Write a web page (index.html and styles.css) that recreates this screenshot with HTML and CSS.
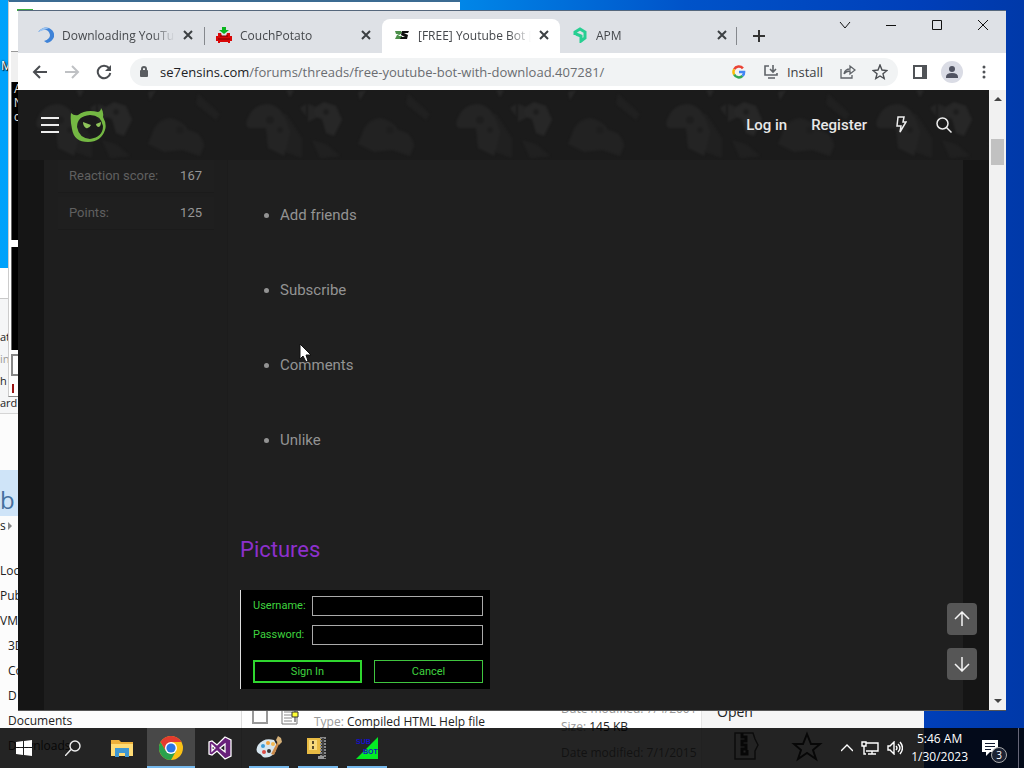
FILE: index.html
```html
<!DOCTYPE html>
<html lang="en">
<head>
<meta charset="utf-8">
<title>Desktop</title>
<link rel="stylesheet" href="styles.css">
</head>
<body>
<div class="desktop">
  <span class="desktop-label">M</span>

  <section class="explorer">
    <div class="ribbon">
      <span>at</span><span class="dim">in</span><span>h</span><span>ard</span>
    </div>
    <div class="banner">b</div>
    <div class="crumbs">s <i></i></div>
    <div class="explorer-body">
      <ul class="nav">
        <li class="root">Loc</li><li class="root">Pub</li><li class="root">VM</li>
        <li>3D</li><li>Co</li><li>D</li><li>Documents</li><li>Downloads</li>
      </ul>
      <div class="files">
        <span class="tick"></span>
        <svg class="doc" width="24" height="26" viewBox="0 0 24 26"><path d="M2 4h15v20H2z" fill="#fff" stroke="#777"/><path d="M4 9h8M4 12h8M4 15h8M4 18h8M4 21h8" stroke="#888"/><path d="M12 6l4-5 6-1-3 5-6 3z" fill="#ff3" stroke="#333"/><path d="M12 12h6v5h-6zM15 8v4M15 17v5" fill="#ff3" stroke="#333"/></svg>
        <div class="type"><span>Type:</span> Compiled HTML Help file</div>
        <div class="meta"><div><span>Date modified: 7/4/2001</span></div><div><span>Size:</span> 145 KB</div></div>
        <div class="meta-second">Date modified: 7/1/2015</div>
      </div>
      <div class="actions">
        <div class="open">Open</div>
        <svg width="100" height="34" viewBox="0 0 100 34"><path d="M4 3h18l2 6 3 6-3 6v8H4z" fill="none" stroke="#444" stroke-width="1.500"/><path d="M11 3v4h4v4h-4v4h4v4h-4v5h5v-4" fill="none" stroke="#222" stroke-width="3"/><path d="M76 4l4 10h9l-7 6 3 9-9-6-9 6 3-9-7-6h9z" fill="none" stroke="#222" stroke-width="2"/></svg>
      </div>
    </div>
  </section>

  <section class="console">
    <div class="console-title"><i></i></div>
    <div class="console-bar"></div>
    <div class="pane pane-a">A<br>N<br>c</div>
    <div class="pane pane-b"></div>
    <div class="field"></div>
    <div class="marker"><i></i></div>
  </section>

  <main class="browser">
    <header class="tabstrip">
      <div class="tabs">
        <div class="tab">
          <svg width="16" height="16" viewBox="0 0 16 16"><path d="M0 5Q5-1 11 1q6 3 5 9-2 5-7 6l-3-2q6-2 6-6-1-6-8-5z" fill="#3f83d8"/><path d="M0 5Q5-1 11 1L6 3z" fill="#9cc4f0"/></svg>
          <span class="tab-title">Downloading YouTub</span>
          <button class="close" aria-label="Close tab"><svg width="10" height="10" viewBox="0 0 10 10"><path d="M1 1l8 8M9 1L1 9"/></svg></button>
        </div>
        <div class="tab split">
          <svg width="16" height="16" viewBox="0 0 16 16"><path d="M8 7L3 3h3V0h4v3h3z" fill="#0ab51e"/><path d="M2 6h3l1 3h4l1-3h3v3h2v5h-2v2h-2v-1H4v1H2v-2H0V9h2z" fill="#d90808"/><path d="M2 12h12M4 9h8" stroke="#700"/></svg>
          <span class="tab-title">CouchPotato</span>
          <button class="close" aria-label="Close tab"><svg width="10" height="10" viewBox="0 0 10 10"><path d="M1 1l8 8M9 1L1 9"/></svg></button>
        </div>
        <div class="tab active">
          <svg width="16" height="16" viewBox="0 0 16 16"><path d="M1 4h6l1 2-4 3h4v3H1l2-4 2-1H2z" fill="#4c8f4a"/><path d="M8 4h7l-1 2h-4l4 2-1 4H6l1-2h4L7 8z" fill="#111"/></svg>
          <span class="tab-title">[FREE] Youtube Bot [</span>
          <button class="close" aria-label="Close tab"><svg width="10" height="10" viewBox="0 0 10 10"><path d="M1 1l8 8M9 1L1 9"/></svg></button>
        </div>
        <div class="tab last">
          <svg width="16" height="16" viewBox="0 0 16 16"><path d="M3 8V5l5-3 5 3v6l-4 3V9L4 7" fill="none" stroke="#27cf92" stroke-width="3"/></svg>
          <span class="tab-title">APM</span>
          <button class="close" aria-label="Close tab"><svg width="10" height="10" viewBox="0 0 10 10"><path d="M1 1l8 8M9 1L1 9"/></svg></button>
        </div>
        <button class="new-tab" aria-label="New tab"><svg width="12" height="12" viewBox="0 0 12 12"><path d="M6 0v12M0 6h12" stroke="#333" stroke-width="2"/></svg></button>
      </div>
      <div class="caption">
        <button aria-label="Search tabs"><svg width="12" height="12" viewBox="0 0 12 12"><path d="M1 3l5 6 5-6"/></svg></button>
        <button aria-label="Minimize"><svg width="12" height="12" viewBox="0 0 12 12"><path d="M1 6.500h10"/></svg></button>
        <button aria-label="Maximize"><svg width="12" height="12" viewBox="0 0 12 12"><path d="M1.500 1.500h9v9h-9z"/></svg></button>
        <button aria-label="Close"><svg width="12" height="12" viewBox="0 0 12 12"><path d="M1 1l10 10M11 1L1 11"/></svg></button>
      </div>
    </header>
    <div class="toolbar">
      <button aria-label="Back"><svg width="16" height="16" viewBox="0 0 16 16"><path d="M15 8H2M8 2L2 8l6 6" stroke="#4a4d51" stroke-width="2" fill="none"/></svg></button>
      <button aria-label="Forward"><svg width="16" height="16" viewBox="0 0 16 16"><path d="M1 8h13M8 2l6 6-6 6" stroke="#bfc1c4" stroke-width="2" fill="none"/></svg></button>
      <button aria-label="Reload"><svg width="16" height="16" viewBox="0 0 16 16"><path d="M13 4a6.300 6.300 0 1 0 1.300 5" stroke="#4a4d51" stroke-width="2" fill="none"/><path d="M15 1v6H9z" fill="#4a4d51"/></svg></button>
      <div class="omnibox">
        <svg width="12" height="14" viewBox="0 0 12 14"><rect x="2" y="5" width="8" height="7" rx="1" fill="#5a5d61"/><path d="M4 6V4a2 2 0 0 1 4 0v2" fill="none" stroke="#5a5d61" stroke-width="2"/></svg>
        <a class="url" href="#"><b>se7ensins.com</b>/forums/threads/free-youtube-bot-with-download.407281/</a>
        <svg class="google" width="14" height="14" viewBox="0 0 14 14" fill="none" stroke-width="2.500"><path d="M2.200 4.300A5.200 5.200 0 0 1 10.900 3.400" stroke="#ea4335"/><path d="M2.200 4.300a5.200 5.200 0 0 0 0 5.200" stroke="#fbbc05"/><path d="M2.200 9.500a5.200 5.200 0 0 0 8.300 1.400" stroke="#34a853"/><path d="M10.500 10.900A5 5 0 0 0 12.100 7H7" stroke="#4285f4"/></svg>
        <button class="install"><svg width="16" height="16" viewBox="0 0 16 16" fill="none" stroke="#5f6368" stroke-width="1.600"><path d="M6 2H2v9h12V9M10 1v7M7 5l3 3 3-3M5 14h7"/></svg>Install</button>
        <button aria-label="Share"><svg width="16" height="16" viewBox="0 0 16 16" fill="none" stroke="#5f6368" stroke-width="1.300"><path d="M1 5v9h11v-3M4 10q1-5 6-5V2l5 4-5 4V7Q6 7 4 10z"/></svg></button>
        <button aria-label="Bookmark"><svg width="16" height="16" viewBox="0 0 16 16" fill="none" stroke="#4a4d51" stroke-width="1.400"><path d="M8 1l2 5 5 .5-4 3.300 1.200 4.700L8 12l-4.200 2.500L5 9.800 1 6.500 6 6z"/></svg></button>
      </div>
      <button aria-label="Side panel"><svg width="14" height="14" viewBox="0 0 14 14"><path d="M1 1h12v12H1z" fill="none" stroke="#505357" stroke-width="2"/><path d="M9 1h4v12H9z" fill="#505357"/></svg></button>
      <button aria-label="Profile"><svg width="22" height="22" viewBox="0 0 22 22"><circle cx="11" cy="11" r="11" fill="#dadce5"/><circle cx="11" cy="8" r="3" fill="#505361"/><path d="M5 16q0-4 6-4t6 4v1H5z" fill="#505361"/></svg></button>
      <button aria-label="Menu"><svg width="4" height="14" viewBox="0 0 4 14" fill="#505357"><circle cx="2" cy="2" r="1.500"/><circle cx="2" cy="7" r="1.500"/><circle cx="2" cy="12" r="1.500"/></svg></button>
    </div>

    <div class="viewport">
      <div class="page">
        <header class="site-header">
          <svg class="pattern" width="100%" height="100%" aria-hidden="true">
            <defs>
              <pattern id="pads" x="80" y="0" width="210" height="70" patternUnits="userSpaceOnUse">
                <path d="M6 18l10-6 12 4 6 14-8 16-8-3-4-14-12-4z" fill="#272727"/>
                <path d="M188 24q-16 0-20 16l20 22 16 6 0-20z" fill="#202020"/>
                <path d="M54 44q4-14 18-16 12 2 18 12 14 2 16 16l-4 10-18-6-18 2-16-8z" fill="#222"/>
                <path d="M100 4l22 20-4 6-20-16z" fill="#202020"/>
                <path d="M148 34q4-18 20-20 12 0 18 12l6 16-6 24-16-8-2-20-18 0z" fill="#242424"/>
                <path d="M4 50l14 4 14 12-20 2z" fill="#202020"/>
                <path d="M50 2l8-2-6 10zM188 0h8l-4 7z" fill="#272727"/>
                <path d="M202 18l6-4v12zM0 14l6 2 2 12-8 4z" fill="#252525"/>
                <g fill="#1e1e1e"><circle cx="18" cy="22" r="3"/><circle cx="82" cy="40" r="4"/><circle cx="172" cy="30" r="4"/><circle cx="182" cy="40" r="3"/></g>
              </pattern>
            </defs>
            <rect width="100%" height="100%" fill="url(#pads)"/>
          </svg>
          <div class="header-row">
            <button aria-label="Menu"><svg width="20" height="16" viewBox="0 0 20 16"><path d="M1 1h18M1 8h18M1 15h18" stroke="#eee" stroke-width="2"/></svg></button>
            <a class="logo" href="#" aria-label="Home"><svg width="36" height="36" viewBox="0 0 36 36"><path d="M1 6q3 3 7 2 8-6 20-3 3-1 3-4 3 4 2 9 4 7 2 13-4 12-17 12Q4 35 2 22 0 13 1 6zM20 8Q7 9 7 20q2 11 13 12 13-2 13-13Q31 8 20 8z" fill="#74b843" fill-rule="evenodd"/><path d="M13 15l8 3q-2 4-5 3-3-2-3-6zM26 17l5-2q0 5-3 5-2-1-2-3z" fill="#8fc45a"/></svg></a>
            <nav>
              <a href="#">Log in</a>
              <a href="#">Register</a>
              <button aria-label="What's new"><svg width="12" height="18" viewBox="0 0 12 18" fill="none" stroke="#eee" stroke-width="1.500"><path d="M3 1h6L8 6h3L5 16l1-6H2z"/></svg></button>
              <button aria-label="Search"><svg width="16" height="16" viewBox="0 0 16 16" fill="none" stroke="#eee" stroke-width="1.500"><circle cx="6.500" cy="6.500" r="5.500"/><path d="M10.500 10.500L15.500 15.500"/></svg></button>
            </nav>
          </div>
        </header>
        <article class="post">
          <aside>
            <dl>
              <div><dt>Reaction score:</dt><dd>167</dd></div>
              <div><dt>Points:</dt><dd>125</dd></div>
            </dl>
          </aside>
          <div class="message">
            <ul><li>Add friends</li><li>Subscribe</li><li>Comments</li><li>Unlike</li></ul>
            <h2>Pictures</h2>
            <form class="login">
              <label for="u">Username:</label><input id="u" type="text">
              <label for="p">Password:</label><input id="p" type="password">
              <div class="login-buttons"><button type="button" class="primary">Sign In</button><button type="button">Cancel</button></div>
            </form>
          </div>
        </article>
        <div class="jump">
          <button aria-label="Top"><svg width="16" height="16" viewBox="0 0 16 16"><path d="M8 15V2M1 8l7-7 7 7"/></svg></button>
          <button aria-label="Bottom"><svg width="16" height="16" viewBox="0 0 16 16"><path d="M8 1v13M1 8l7 7 7-7"/></svg></button>
        </div>
      </div>
      <div class="scrollbar"><i class="up"></i><span class="thumb"></span><i class="down"></i></div>
    </div>
  </main>

  <footer class="taskbar">
    <div class="apps">
      <button aria-label="Start"><svg width="16" height="16" viewBox="0 0 16 16" fill="#fff"><path d="M0 2l7-1v6H0zM8 1l8-1v7H8zM0 8h7v7l-7-1zM8 8h8v8l-8-1z"/></svg></button>
      <button aria-label="Search"><svg width="16" height="16" viewBox="0 0 16 16" fill="none" stroke="#eee" stroke-width="1.400"><circle cx="10" cy="6" r="5"/><path d="M6 9.500L0 16"/></svg></button>
      <button aria-label="File Explorer"><svg width="22" height="18" viewBox="0 0 22 18"><path d="M0 1h8l2 2h12v14H0z" fill="#eeb13b"/><path d="M0 5h22v12H0z" fill="#ffdc75"/><path d="M4 9h14v9h-4v-4H8v4H4z" fill="#3e97d3"/></svg></button>
      <button class="on current" aria-label="Chrome"><svg width="24" height="24" viewBox="0 0 24 24"><circle cx="12" cy="12" r="12" fill="#fbc116"/><path d="M1.600 6a12 12 0 0 0 10.400 18l5-9-10 0z" fill="#2aa24c"/><path d="M1.600 6A12 12 0 0 1 22.400 6H12L7 15z" fill="#e33b2e"/><circle cx="12" cy="12" r="6" fill="#fff"/><circle cx="12" cy="12" r="4.600" fill="#2a76e4"/></svg></button>
      <button aria-label="Visual Studio"><svg width="24" height="24" viewBox="0 0 24 24"><path d="M17 1l6 3v16l-6 3-8-8-5 4-3-1V6l3-1 5 4zM17 8l-5 4 5 4zM4 9v6l3-3z" fill="#68217a" fill-rule="evenodd" stroke="#fff" stroke-width="1.300"/></svg></button>
      <button class="on" aria-label="Paint"><svg width="26" height="24" viewBox="0 0 26 24"><path d="M2 9Q8 1 18 4q5 7 0 14-6 5-11 3-2-3-5-4-3-3 0-8z" fill="#d6e5ef"/><circle cx="7" cy="10" r="2" fill="#3b9bd8"/><circle cx="12" cy="7" r="2" fill="#f1a33e"/><circle cx="17" cy="8" r="2" fill="#f0b752"/><circle cx="8" cy="16" r="2" fill="#da4d47"/><circle cx="13" cy="15" r="2" fill="#333"/><path d="M15 18L22 5l2 1-6 13z" fill="#ca8a4b"/><path d="M20 4l2-4 3 2 1 4-3 3z" fill="#d5b078"/></svg></button>
      <button class="on" aria-label="Archiver"><svg width="24" height="24" viewBox="0 0 24 24"><path d="M1 2h14v16H1z" fill="#e9bb43"/><path d="M3 4h8v10H3z" fill="#f8da7c"/><path d="M7 5v3M7 10v3" stroke="#594b2b" stroke-width="2"/><path d="M17 1v22" stroke="#888" stroke-width="6" stroke-dasharray="2 1"/><path d="M17 2v20" stroke="#444" stroke-width="2"/><path d="M12 20h6v3h-6z" fill="#999"/></svg></button>
      <button class="on" aria-label="Sub Bot"><svg width="24" height="24" viewBox="0 0 24 24"><path d="M23 1v22H1z" fill="#04ec24"/><text class="bot" x="1" y="8">SUB</text><text class="bot" x="8" y="18">BOT</text></svg></button>
    </div>
    <div class="tray">
      <svg width="12" height="8" viewBox="0 0 12 8"><path d="M0 7l6-6 6 6"/></svg>
      <svg width="18" height="14" viewBox="0 0 18 14"><path d="M5 2h12v8H5M11 10v3M7 13h8M1 1h4v4H1zM3 5v8h2"/></svg>
      <svg width="16" height="14" viewBox="0 0 16 14"><path d="M1 5h2l4-4v12L3 9H1zM9 5q2 2 0 4M11 3q4 4 0 8M13 1q5 6 0 12"/></svg>
      <div class="clock"><div>5:46 AM</div><div>1/30/2023</div></div>
      <button class="notes" aria-label="Notifications"><svg width="16" height="16" viewBox="0 0 16 16"><path d="M0 0h16v12H8l-4 4v-4H0z" fill="#fff"/><path d="M3 3.500h10M3 6.500h10M3 9.500h6" stroke="#111a30"/></svg><span>3</span></button>
    </div>
  </footer>
  <svg class="cursor" width="13" height="20" viewBox="0 0 13 20"><path d="M1 1v15l3-3 3 6 2-1-2-6h5z" fill="#fff" stroke="#111"/></svg>
</div>
</body>
</html>
```
FILE: styles.css
```css
* { box-sizing: border-box; }
body {
  margin: 0;
  font-family: "Open Sans", "Noto Sans", sans-serif;
  font-size: 12px;
  color: #222;
}
button {
  border: 0;
  padding: 0;
  background: none;
  font: inherit;
  color: inherit;
  display: flex;
  align-items: center;
  justify-content: center;
}
a { color: inherit; text-decoration: none; }
ul, dl, dd { margin: 0; padding: 0; }
svg { flex: none; }

.desktop {
  position: relative;
  height: 100vh;
  overflow: hidden;
  background: linear-gradient(90deg, #00a2fb 0, #0086e8 45%, #0053c9 67%, #003fb9 90%, #0039a9);
}
.desktop-label { position: absolute; left: 1px; top: 58px; color: #fff; text-shadow: 0 0 2px #000, 1px 1px 1px #000; line-height: 16px; }

/* File explorer behind the browser */
.explorer {
  position: absolute;
  left: 0;
  right: 100px;
  top: 268px;
  bottom: 0;
  display: flex;
  flex-direction: column;
  background: #fcfcfc;
  overflow: hidden;
}
.ribbon {
  height: 146px;
  margin-bottom: 56px;
  padding-top: 58px;
  display: flex;
  flex-direction: column;
  background: linear-gradient(#fff 30px, #c8c8c8 30px, #c8c8c8 31px, #f5f6f7 31px);
  border-bottom: 1px solid #d5d5d5;
  font-size: 11px;
  line-height: 22px;
}
.ribbon .dim { color: #999; }
.banner { height: 46px; padding-top: 12px; background: #cfe4f8; color: #45709f; font-size: 24px; line-height: 36px; }
.crumbs { height: 42px; line-height: 20px; display: flex; align-items: flex-start; gap: 2px; }
.crumbs i { margin-top: 6px; border: 4px solid transparent; border-left-color: #888; border-right: 0; }
.explorer-body { flex: 1; display: flex; min-height: 0; }
.nav { width: 242px; list-style: none; line-height: 25px; border-right: 1px solid #ddd; }
.nav li { padding-left: 8px; }
.nav .root { padding-left: 0; }
.files {
  flex: 1;
  padding: 142px 0 0 10px;
  display: grid;
  grid-template-columns: 28px 34px 1fr 140px;
  grid-template-rows: 44px 24px;
  align-content: start;
  white-space: nowrap;
  background: #fff;
}
.files span { color: #999; }
.tick { width: 16px; height: 24px; border: 2px solid #999; }
.type { line-height: 44px; }
.meta { line-height: 18px; }
.meta-second { grid-column: 4; color: #777; }
.actions { width: 223px; padding: 144px 0 0 15px; background: #f5f5f5; border-left: 1px solid #e5e5e5; }
.open { font-size: 14px; line-height: 20px; }
.actions svg { display: block; margin: 8px 0 0 14px; }

/* Application window with console panes */
.console {
  position: absolute;
  left: 8px;
  top: 0;
  width: 452px;
  height: 397px;
  padding-left: 2px;
  border-top: 2px solid #3b6b92;
  border-bottom: 1px solid #888;
  border-left: 1px solid #ccc;
  background: #fff;
  overflow: hidden;
}
.console-title { height: 50px; padding: 7px 6px; border-bottom: 1px solid #999; }
.console-title i { display: block; width: 16px; height: 14px; border-top: 2px solid #3bb33b; }
.console-bar { height: 30px; background: #f0f0f0; }
.pane { height: 158px; padding-left: 2px; border-left: 1px solid #666; background: #000; color: #ddd; font: 12px/14px "Liberation Sans", sans-serif; }
.pane-b { height: 103px; margin-top: 7px; }
.field { height: 22px; margin-top: 4px; border: 2px solid #888; }
.marker { height: 18px; margin-top: 4px; padding: 4px 0 0 1px; }
.marker i { display: block; width: 2px; height: 9px; background: #911; }

/* Browser */
.browser {
  position: absolute;
  left: 18px;
  right: 18px;
  top: 10px;
  bottom: 57px;
  display: flex;
  flex-direction: column;
  border-top: 1px solid #55677c;
  border-bottom: 1px solid #555;
  background: #fff;
}
.tabstrip { display: flex; justify-content: space-between; height: 42px; background: #dee1e6; }
.tabs { display: flex; padding: 8px 0 0 8px; }
.tab { width: 178px; display: flex; align-items: center; gap: 8px; padding: 0 11px 2px 12px; color: #45484c; position: relative; }
.tab.active { background: #fff; border-radius: 8px 8px 0 0; }
.tab.split::before, .tab.last::after { content: ""; position: absolute; left: 0; top: 8px; width: 1px; height: 18px; background: #85888d; }
.tab.last::after { left: 176px; }
.tab-title {
  flex: 1;
  overflow: hidden;
  white-space: nowrap;
  -webkit-mask-image: linear-gradient(90deg, #000 80%, transparent);
  mask-image: linear-gradient(90deg, #000 80%, transparent);
}
.close svg { stroke: #3c4043; stroke-width: 2; }
.new-tab { width: 42px; }
.caption { display: flex; height: 28px; }
.caption button { width: 46px; }
.caption svg { fill: none; stroke: #111; }
.toolbar { display: flex; align-items: center; height: 37px; padding: 0 6px; background: #fff; }
.toolbar > button { width: 32px; height: 32px; }
.omnibox {
  flex: 1;
  display: flex;
  align-items: center;
  height: 28px;
  margin: 0 6px 0 10px;
  padding: 0 2px 0 8px;
  border-radius: 14px;
  background: #f1f3f4;
}
.url { flex: 1; min-width: 0; margin-left: 10px; white-space: nowrap; font-size: 13px; color: #6a6d71; }
.url b { font-weight: 400; color: #202124; }
.omnibox button { width: 32px; }
.omnibox .google { margin-right: 17px; }
.omnibox .install { width: 60px; margin-right: 9px; gap: 8px; font-size: 13px; color: #3c4043; }

.viewport { flex: 1; display: flex; min-height: 0; }
.page { flex: 1; position: relative; overflow: hidden; background: #151515; font-family: Roboto, sans-serif; }
.site-header { position: relative; height: 70px; background: #1b1b1b; }
.pattern { position: absolute; inset: 0; filter: blur(1px); }
.header-row { position: relative; height: 70px; display: flex; align-items: center; padding: 0 36px 0 22px; color: #e8e8e8; }
.logo { margin-left: 10px; display: flex; }
.site-header nav { margin-left: auto; display: flex; align-items: center; gap: 24px; font-size: 15px; font-weight: 500; }
.site-header nav button { width: 19px; }
.post { display: flex; height: 100%; margin: 0 26px; background: #1e1e1e; }
.post aside { width: 184px; padding: 0 13px 0 14px; font-size: 13px; border-right: 1px solid #1c1c1c; }
.post dl div { display: flex; justify-content: space-between; padding: 0 12px 0 11px; line-height: 32px; margin-bottom: 4px; background: #1f1f1f; border-bottom: 1px solid #1b1b1b; }
.post dt { color: #606060; }
.post dd { color: #969696; }
.message { flex: 1; padding: 43px 12px; color: #939393; background: #1f1f1f; }
.message ul { padding-left: 40px; font-size: 15px; line-height: 25px; }
.message li { margin-bottom: 50px; }
.message h2 { margin: 0 0 24px; padding-top: 31px; font-size: 22px; line-height: 32px; font-weight: 400; color: #8d30cc; }
.login {
  width: 250px;
  display: grid;
  grid-template-columns: 59px 1fr;
  align-items: center;
  row-gap: 9px;
  padding: 6px 7px 6px 12px;
  background: #000;
  border-left: 1px solid #ddd;
  color: #3fd33f;
  font: 11px/20px Roboto, "Liberation Sans", sans-serif;
}
.login input { width: 100%; height: 20px; border: 1px solid #aaa; background: #000; color: #3fd33f; }
.login-buttons { grid-column: 1 / -1; display: grid; grid-template-columns: 1fr 1fr; gap: 12px; margin-top: 6px; }
.login button { height: 23px; border: 1px solid #3fc53f; }
.login .primary { border: 2px solid #2fd62f; }
.jump { position: absolute; right: 12px; bottom: 30px; display: flex; flex-direction: column; gap: 13px; }
.jump button { width: 30px; height: 32px; border-radius: 4px; background: #565656; }
.jump svg { fill: none; stroke: #f4f4f4; stroke-width: 1.5; }
.scrollbar { width: 17px; display: flex; flex-direction: column; align-items: center; padding: 7px 0; background: #f1f1f1; }
.scrollbar i { border: 4px solid transparent; }
.scrollbar .up { border-bottom-color: #444; border-top: 0; margin-bottom: 38px; }
.scrollbar .down { border-top-color: #444; border-bottom: 0; margin-top: auto; }
.thumb { width: 13px; height: 26px; background: #c1c1c1; }

/* Taskbar */
.taskbar { position: absolute; left: 0; right: 0; bottom: 0; height: 40px; display: flex; justify-content: space-between; background: rgba(4, 4, 4, 0.87); color: #fff; }
.apps { display: flex; gap: 1px; }
.apps button { width: 48px; position: relative; }
.apps .current { background: #484848; }
.apps .on::after { content: ""; position: absolute; left: 4px; right: 4px; bottom: 0; height: 2px; background: #76b9ed; }
.apps .current::after { left: 0; right: 0; }
.bot { font: bold 7px "Liberation Sans", sans-serif; fill: #1410c8; }
.tray { display: flex; align-items: center; padding-right: 5px; gap: 8px; }
.tray > svg { fill: none; stroke: #fff; stroke-width: 1.4; }
.clock { text-align: center; line-height: 18px; }
.notes { position: relative; width: 43px; height: 40px; padding-left: 6px; justify-content: flex-start; border-right: 1px solid #667; }
.notes span { position: absolute; left: 15px; top: 19px; width: 16px; height: 16px; border: 1px solid #aaa; border-radius: 50%; background: #1b2233; font-size: 10px; line-height: 14px; }
.cursor { position: absolute; left: 299px; top: 343px; }
```
